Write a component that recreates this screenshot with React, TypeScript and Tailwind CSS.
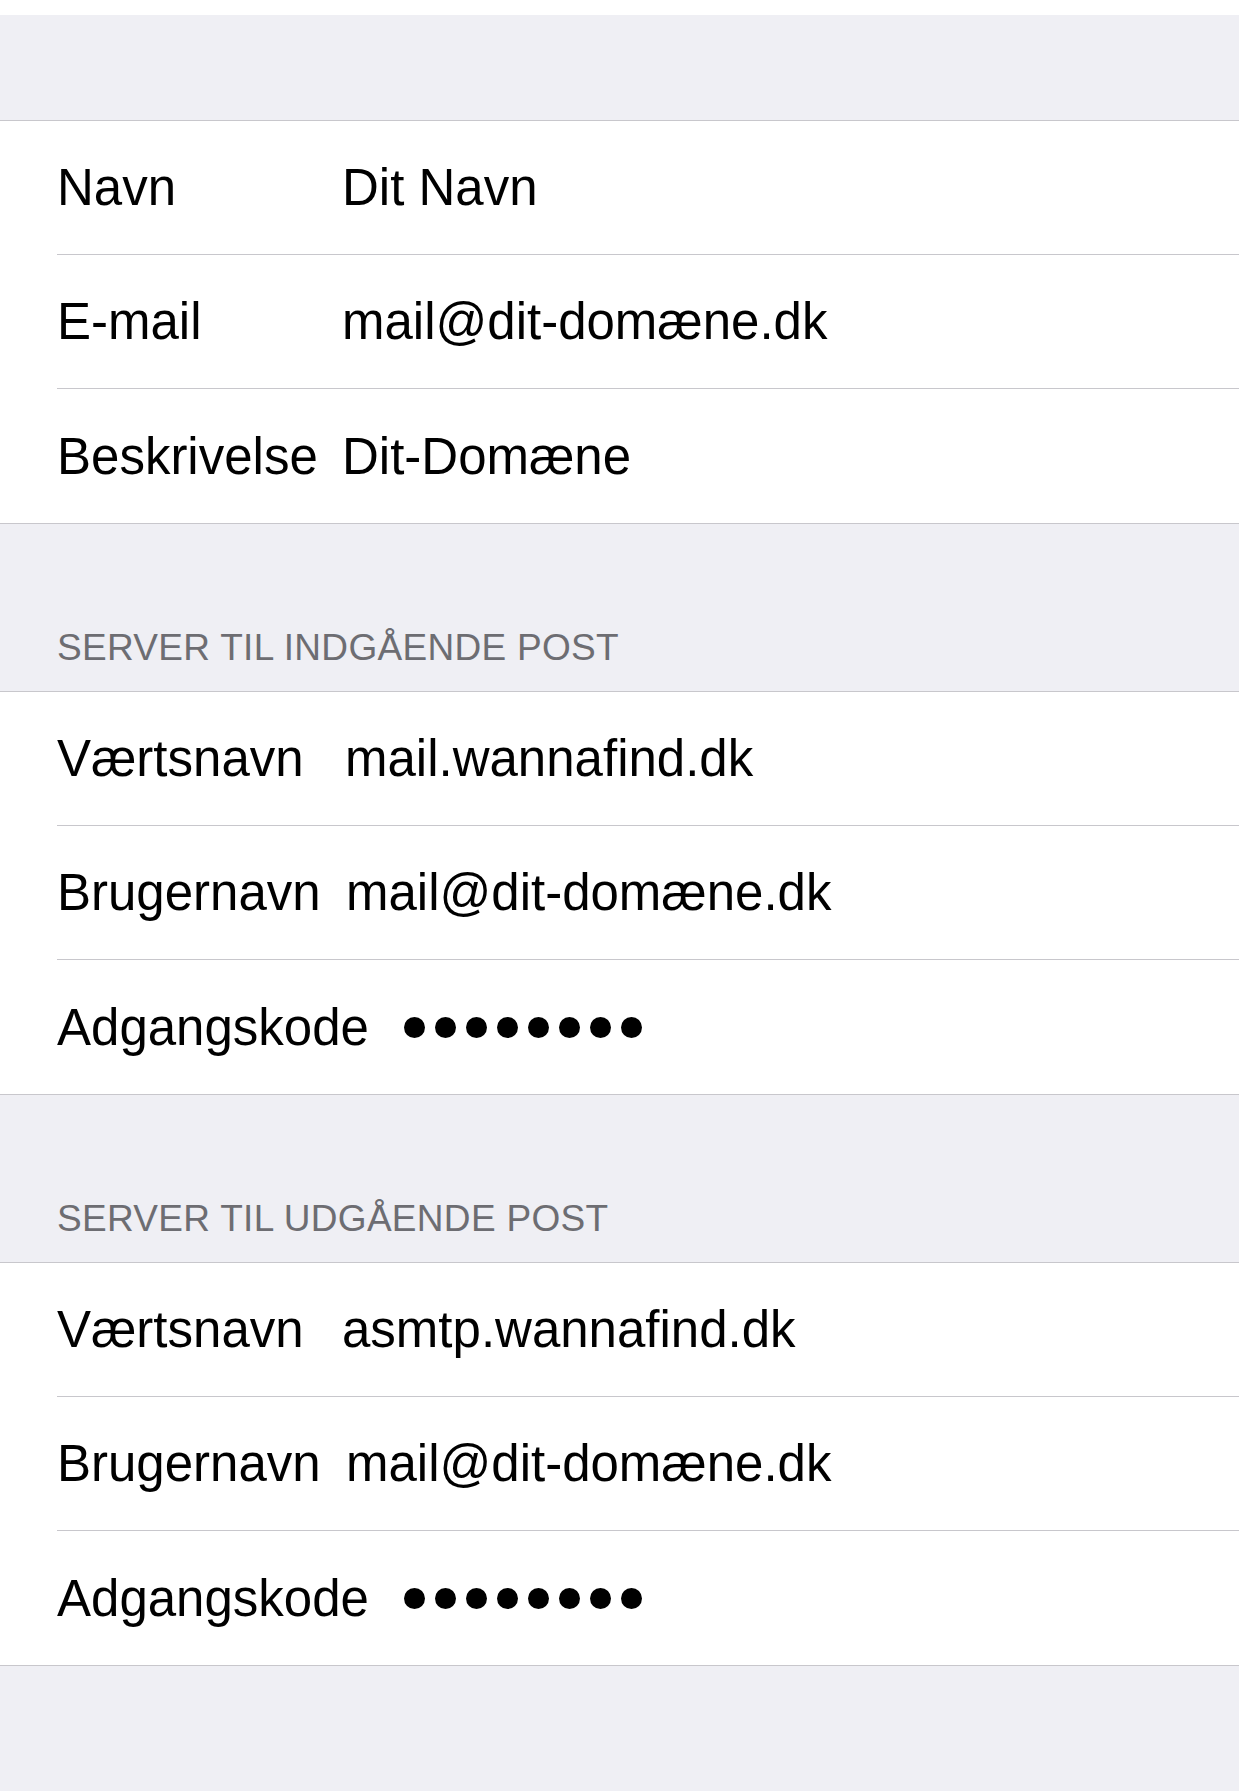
import React from "react";

type Row = {
  label: string;
  value: string;
  labelWidth: string;
  secret?: boolean;
};

type Section = {
  header?: string;
  rows: Row[];
};

const sections: Section[] = [
  {
    rows: [
      { label: "Navn", value: "Dit Navn", labelWidth: "w-[285px]" },
      { label: "E-mail", value: "mail@dit-domæne.dk", labelWidth: "w-[285px]" },
      { label: "Beskrivelse", value: "Dit-Domæne", labelWidth: "w-[285px]" },
    ],
  },
  {
    header: "SERVER TIL INDGÅENDE POST",
    rows: [
      { label: "Værtsnavn", value: "mail.wannafind.dk", labelWidth: "w-[288px]" },
      { label: "Brugernavn", value: "mail@dit-domæne.dk", labelWidth: "w-[289px]" },
      { label: "Adgangskode", value: "••••••••", labelWidth: "w-[347px]", secret: true },
    ],
  },
  {
    header: "SERVER TIL UDGÅENDE POST",
    rows: [
      { label: "Værtsnavn", value: "asmtp.wannafind.dk", labelWidth: "w-[285px]" },
      { label: "Brugernavn", value: "mail@dit-domæne.dk", labelWidth: "w-[289px]" },
      { label: "Adgangskode", value: "••••••••", labelWidth: "w-[347px]", secret: true },
    ],
  },
];

export default function App() {
  return (
    <div className="min-h-screen bg-[#efeff4] font-['Liberation_Sans',Arial,sans-serif]">
      <div className="h-[15px] bg-white" />
      <div className="h-[105px]" />
      {sections.map((section, i) => (
        <div key={i}>
          {section.header ? <Header text={section.header} /> : ""}
          <Group rows={section.rows} />
        </div>
      ))}
    </div>
  );
}

const Header = ({ text }: { text: string }) => {
  return (
    <div className="h-[167px] pt-[105px] pl-[57px] text-[37px] leading-none tracking-[0.3px] text-[#6d6d72]">
      {text}
    </div>
  );
};

const Group = ({ rows }: { rows: Row[] }) => {
  return (
    <div className="bg-white border-y border-[#c8c7cc]">
      {rows.map((row, i) => (
        <div key={row.label + i}>
          {i > 0 ? <div className="ml-[57px] h-px bg-[#c8c7cc]" /> : ""}
          <FieldRow row={row} last={i === rows.length - 1} />
        </div>
      ))}
    </div>
  );
};

const FieldRow = ({ row, last }: { row: Row; last: boolean }) => {
  return (
    <div
      className={`flex ${last ? "h-[134px]" : "h-[133px]"} items-center pl-[57px] text-[51px] leading-none text-black`}
    >
      <div className={`${row.labelWidth} shrink-0`}>{row.label}</div>
      {row.secret ? (
        <div className="flex gap-[10px]" aria-label={row.value}>
          {Array.from({ length: 8 }).map((_, i) => (
            <span key={i} className="block h-[21px] w-[21px] rounded-full bg-black" />
          ))}
        </div>
      ) : (
        <div>{row.value}</div>
      )}
    </div>
  );
};
